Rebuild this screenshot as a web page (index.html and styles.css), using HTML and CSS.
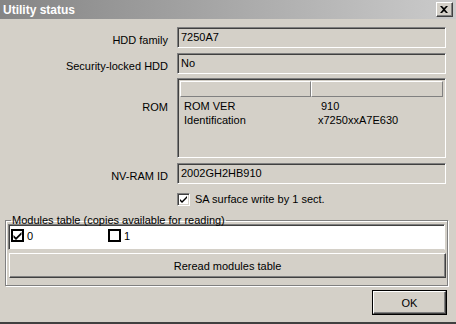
FILE: index.html
```html
<!DOCTYPE html>
<html>
<head>
<meta charset="utf-8">
<link rel="stylesheet" href="styles.css">
</head>
<body>
<div class="window">
  <div class="titlebar">
    <span class="title">Utility status</span>
    <span class="close"><svg width="8" height="7" viewBox="0 0 8 7"><path d="M0 0 H2 L4 2 L6 0 H8 L5 3.5 L8 7 H6 L4 5 L2 7 H0 L3 3.5 Z" fill="#000"/></svg></span>
  </div>
  <div class="content">
    <div class="form">
      <div class="label">HDD family</div>
      <div class="field">7250A7</div>
      <div class="label">Security-locked HDD</div>
      <div class="field">No</div>
      <div class="label rom-label">ROM</div>
      <div class="listview">
        <div class="lv-header"><div class="hcell c1"></div><div class="hcell c2"></div></div>
        <div class="lv-row"><span class="c1">ROM VER</span><span class="c2 v1">910</span></div>
        <div class="lv-row"><span class="c1">Identification</span><span class="c2">x7250xxA7E630</span></div>
      </div>
      <div class="label">NV-RAM ID</div>
      <div class="field">2002GH2HB910</div>
      <div></div>
      <div class="check-row"><span class="cb3d"><svg width="9" height="9" viewBox="0 0 9 9"><path d="M1 4 L3 6 L8 1 L8 3 L3 8 L1 6 Z" fill="#000"/></svg></span><span>SA surface write by 1 sect.</span></div>
    </div>
    <fieldset class="group">
      <legend>Modules table (copies available for reading)</legend>
      <div class="modlist">
        <div class="mod"><span class="cbflat"><svg width="9" height="9" viewBox="0 0 9 9"><path d="M0.5 4 L3 6.5 L8.5 1 L8.5 3.5 L3 9 L0.5 6.5 Z" fill="#000"/></svg></span><span>0</span></div>
        <div class="mod"><span class="cbflat"></span><span>1</span></div>
      </div>
      <div class="button wide">Reread modules table</div>
    </fieldset>
    <div class="footer">
      <div class="button default">OK</div>
    </div>
  </div>
</div>
</body>
</html>
```
FILE: styles.css
```css
* { box-sizing: border-box; }
html, body { margin: 0; padding: 0; }
body {
  width: 456px;
  height: 324px;
  background: #d4d0c8;
  font-family: "Liberation Sans", Arial, sans-serif;
  font-size: 11px;
  color: #000;
  overflow: hidden;
}
.window {
  width: 456px;
  height: 324px;
  background: #d4d0c8;
  border-bottom: 2px solid #404040;
  display: flex;
  flex-direction: column;
}
.titlebar {
  height: 19px;
  background: linear-gradient(to right, #858585, #cbcbcb);
  display: flex;
  align-items: center;
  justify-content: space-between;
  padding: 0 3px 0 3px;
}
.title {
  color: #fff;
  font-weight: bold;
  font-size: 12px;
  font-family: "Liberation Sans", Arial, sans-serif;
}
.close {
  width: 17px;
  height: 15px;
  background: #d4d0c8;
  border-top: 1px solid #fff;
  border-left: 1px solid #fff;
  border-right: 1px solid #404040;
  border-bottom: 1px solid #404040;
  box-shadow: inset -1px -1px 0 #808080;
  display: flex;
  align-items: center;
  justify-content: center;
  padding-right: 1px;
}
.close svg { display: block; }
.content {
  flex: 1;
  display: flex;
  flex-direction: column;
  padding: 8px 8px 0 5px;
}
.form {
  display: grid;
  grid-template-columns: 172px 269px;
  column-gap: 0;
  row-gap: 5px;
}
.label {
  text-align: right;
  padding-right: 9px;
  align-self: end;
  padding-bottom: 2px;
}
.rom-label {
  align-self: start;
  padding-top: 22px;
}
.field {
  height: 21px;
  border-top: 1px solid #808080;
  border-left: 1px solid #808080;
  border-right: 1px solid #fff;
  border-bottom: 1px solid #fff;
  box-shadow: inset 1px 1px 0 #404040, inset -1px -1px 0 #d4d0c8;
  padding: 2px 3px;
  line-height: 15px;
}
.listview {
  height: 80px;
  margin-top: -1px;
  border-top: 1px solid #808080;
  border-left: 1px solid #808080;
  border-right: 1px solid #fff;
  border-bottom: 1px solid #fff;
  box-shadow: inset 1px 1px 0 #404040, inset -1px -1px 0 #d4d0c8;
  padding: 2px 2px 1px 2px;
}
.lv-header {
  display: flex;
  height: 16px;
}
.hcell {
  height: 16px;
  border-top: 1px solid #fff;
  border-left: 1px solid #fff;
  border-right: 1px solid #808080;
  border-bottom: 1px solid #808080;
}
.hcell.c1 { width: 131px; }
.hcell.c2 { flex: 1; }
.lv-row {
  display: flex;
  height: 14px;
  line-height: 14px;
  padding-left: 4px;
}
.lv-header + .lv-row { margin-top: 2px; }
.lv-row .c1 { width: 134px; }
.lv-row .v1 { padding-left: 3px; }
.check-row {
  margin-top: 3px;
  display: flex;
  align-items: center;
  gap: 5px;
  height: 14px;
}
.cb3d {
  width: 13px;
  height: 13px;
  background: #fff;
  border-top: 1px solid #808080;
  border-left: 1px solid #808080;
  border-right: 1px solid #fff;
  border-bottom: 1px solid #fff;
  box-shadow: inset 1px 1px 0 #404040, inset -1px -1px 0 #d4d0c8;
  display: flex;
  align-items: center;
  justify-content: center;
}
.cb3d svg { display: block; }
.group {
  margin: 9px 0 0 0;
  width: 443px;
  height: 71px;
  padding: 0 2px 0 2px;
  border: 1px solid #808080;
  box-shadow: 1px 1px 0 #fff, inset 1px 1px 0 #fff;
  min-width: 0;
}
.group legend {
  padding: 0 1px;
  margin-left: 3px;
  line-height: 11px;
}
.modlist {
  margin-top: -2px;
  height: 26px;
  background: #fff;
  border-top: 1px solid #808080;
  border-left: 1px solid #808080;
  border-right: 1px solid #fff;
  border-bottom: 1px solid #d4d0c8;
  box-shadow: inset 1px 1px 0 #404040;
  display: flex;
  padding: 4px 0 0 2px;
}
.mod {
  display: flex;
  align-items: center;
  gap: 3px;
  width: 97px;
  height: 13px;
}
.cbflat {
  width: 13px;
  height: 13px;
  border: 2px solid #000;
  background: #fff;
  display: flex;
  align-items: center;
  justify-content: center;
}
.cbflat svg { display: block; width: 9px; height: 9px; }
.button {
  background: #d4d0c8;
  border-top: 1px solid #fff;
  border-left: 1px solid #fff;
  border-right: 1px solid #404040;
  border-bottom: 1px solid #404040;
  box-shadow: inset -1px -1px 0 #808080;
  display: flex;
  align-items: center;
  justify-content: center;
}
.button.wide {
  margin-top: 3px;
  height: 25px;
  width: 437px;
  margin-left: 1px;
}
.footer {
  display: flex;
  justify-content: flex-end;
  margin-top: 5px;
}
.button.default {
  width: 73px;
  height: 23px;
  outline: 1px solid #000;
  margin-right: 2px;
}
```
